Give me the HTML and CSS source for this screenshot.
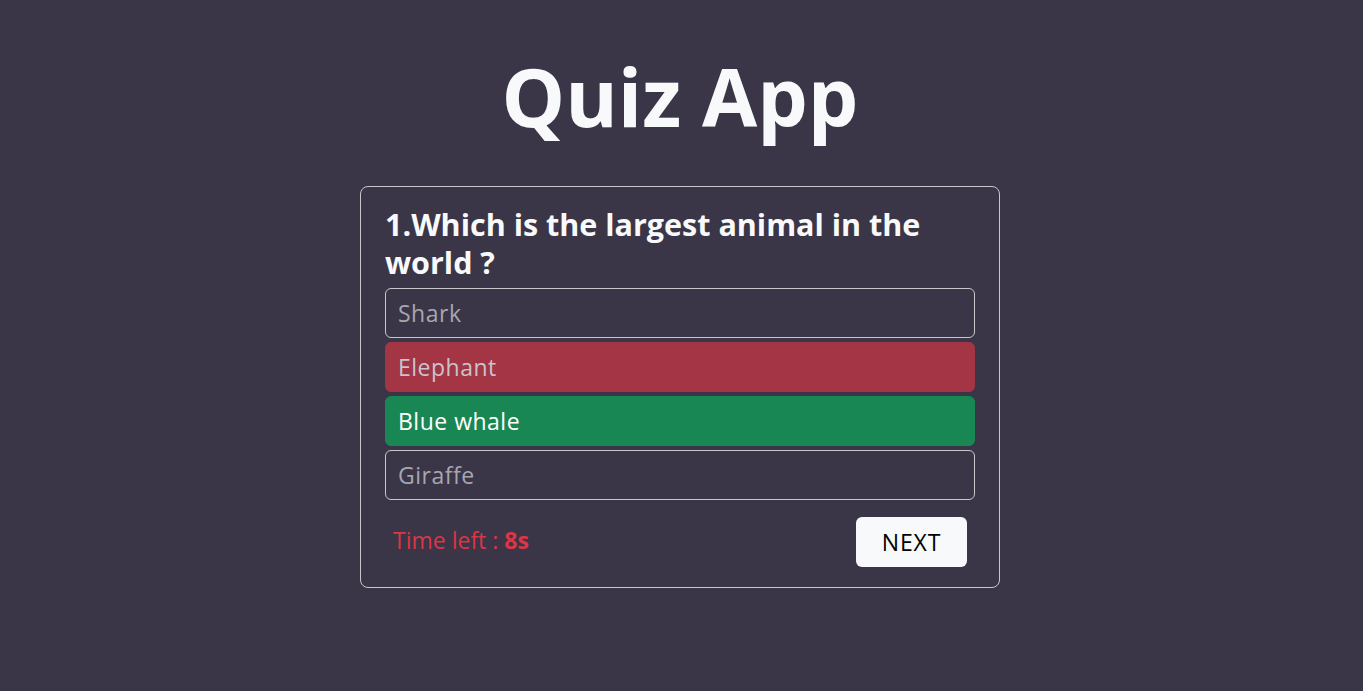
FILE: index.html
```html
<!DOCTYPE html>
<html lang="en">
<head>
<meta charset="utf-8">
<title>Quiz App</title>
<link rel="stylesheet" href="styles.css">
</head>
<body>
<main class="app">
  <h1 class="title">Quiz App</h1>
  <section class="card">
    <h2 class="question">1.Which is the largest animal in the world ?</h2>
    <ul class="options">
      <li class="option">Shark</li>
      <li class="option wrong">Elephant</li>
      <li class="option correct">Blue whale</li>
      <li class="option">Giraffe</li>
    </ul>
    <div class="footer">
      <span class="timer">Time left : <b>8s</b></span>
      <button class="next">NEXT</button>
    </div>
  </section>
</main>
</body>
</html>
```
FILE: styles.css
```css
html, body {
  margin: 0;
  padding: 0;
}
body {
  background: #3a3647;
  font-family: "Open Sans", "Noto Sans", sans-serif;
  color: #f8f9fa;
  min-height: 691px;
}
.app {
  display: flex;
  flex-direction: column;
  align-items: center;
  padding-top: 46px;
}
.title {
  margin: 0 3px 0 0;
  font-size: 80px;
  font-weight: 700;
  line-height: 100px;
  color: #f8f9fa;
  letter-spacing: 0;
}
.card {
  margin: 40px 3px 0 0;
  width: 640px;
  box-sizing: border-box;
  border: 1px solid #c8c8cc;
  border-radius: 8px;
  padding: 18px 24px 20px;
}
.question {
  margin: 0 0 7px;
  font-size: 30.5px;
  line-height: 38px;
  font-weight: 700;
  color: #f8f9fa;
  padding-right: 30px;
}
.options {
  list-style: none;
  margin: 0;
  padding: 0;
  display: flex;
  flex-direction: column;
  gap: 4px;
}
.option {
  height: 50px;
  box-sizing: border-box;
  border: 1px solid #c8c8cc;
  border-radius: 6px;
  padding: 0 12px;
  display: flex;
  align-items: center;
  font-size: 23px;
  letter-spacing: 0.5px;
  color: #a8a6b0;
}
.option.wrong {
  background: #a33545;
  border-color: #a33545;
  color: #c9c3cb;
}
.option.correct {
  background: #198754;
  border-color: #198754;
  color: #ffffff;
}
.footer {
  display: flex;
  justify-content: space-between;
  align-items: center;
  margin-top: 17px;
  padding: 0 8px;
}
.timer {
  color: #dc3545;
  font-size: 23px;
  letter-spacing: 0;
  margin-top: -4px;
}
.timer b {
  font-weight: 700;
}
.next {
  width: 111px;
  height: 50px;
  border: none;
  border-radius: 6px;
  background: #f8f9fa;
  color: #000;
  font-family: inherit;
  font-size: 23px;
  letter-spacing: 0.8px;
  cursor: pointer;
}
```
